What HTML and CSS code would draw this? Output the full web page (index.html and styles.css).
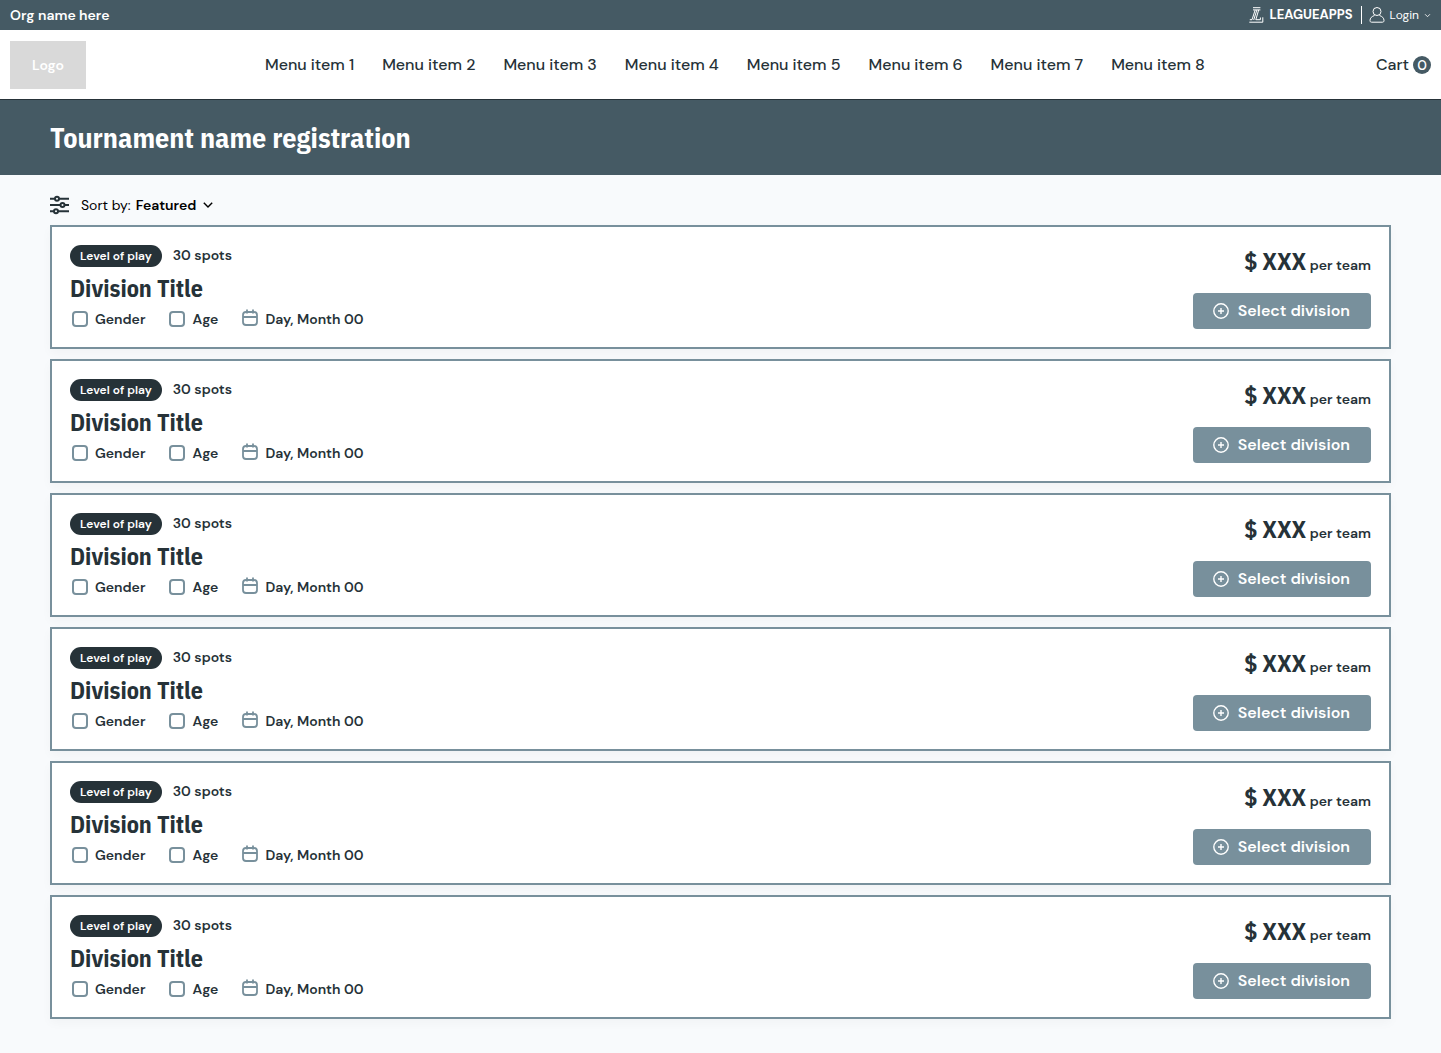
FILE: index.html
```
<!DOCTYPE html>
<html lang="en">
<head>
    <meta charset="UTF-8">
    <meta name="viewport" content="width=device-width, initial-scale=1.0">
    <title>Tournament name registration</title>
    <link rel="stylesheet" href="styles.css">
</head>
<body>

<!-- shared icons -->
<svg class="sprite" aria-hidden="true">
    <symbol id="icon-calendar" viewBox="0 0 20 20">
        <rect x="3" y="3" width="14" height="13" rx="3"/>
        <path d="M3 8h14M7 .5v4M13 .5v4"/>
    </symbol>
    <symbol id="icon-plus" viewBox="0 0 18 18">
        <circle cx="9" cy="9" r="7.2"/>
        <path d="M9 6v6M6 9h6"/>
    </symbol>
    <symbol id="icon-chevron" viewBox="0 0 10 10">
        <path d="M1.5 3.2L5 6.7l3.5-3.5"/>
    </symbol>
</svg>

<header>
    <div class="topbar">
        <span class="org">Org name here</span>
        <div class="account">
            <a class="brand" href="#">
                <svg width="15" height="16" viewBox="0 0 15 16">
                    <path d="M4 .7h7.4M4 2.9h7.4M6.2 2.9L3 12.7H.8M7.9 2.9L4.7 13M9.7 2.9L6.8 12.7h4.6v-2.2M.3 15.2h13.5v-4.9"/>
                </svg>
                <span>LEAGUEAPPS</span>
            </a>
            <button class="login" type="button">
                <svg width="16" height="18" viewBox="0 0 16 18">
                    <circle cx="8" cy="5.5" r="4"/>
                    <path d="M5.5 9.5C2.8 10.4 1 12 1 14.5c0 1.2.6 1.7 1.6 1.7h10.8c1 0 1.6-.5 1.6-1.7 0-2.5-1.8-4.1-4.5-5"/>
                </svg>
                <span>Login</span>
                <svg class="chevron" width="7" height="7"><use href="#icon-chevron"/></svg>
            </button>
        </div>
    </div>
    <div class="mainbar">
        <a class="logo" href="#">Logo</a>
        <nav class="menu">
            <a href="#">Menu item 1</a>
            <a href="#">Menu item 2</a>
            <a href="#">Menu item 3</a>
            <a href="#">Menu item 4</a>
            <a href="#">Menu item 5</a>
            <a href="#">Menu item 6</a>
            <a href="#">Menu item 7</a>
            <a href="#">Menu item 8</a>
        </nav>
        <a class="cart" href="#">Cart <span class="count">0</span></a>
    </div>
</header>

<div class="banner">
    <h1>Tournament name registration</h1>
</div>

<main>
    <div class="sort">
        <svg class="filters" width="20" height="20" viewBox="0 0 20 20">
            <path d="M0 3.7h5M9 3.7h10M0 10h10.5M14.5 10H19M0 16.3h4M8 16.3h11"/>
            <circle cx="7" cy="3.7" r="2"/>
            <circle cx="12.5" cy="10" r="2"/>
            <circle cx="6" cy="16.3" r="2"/>
        </svg>
        <label for="sort">Sort by:</label>
        <select id="sort">
            <option>Featured</option>
        </select>
        <svg class="chevron" width="12" height="12"><use href="#icon-chevron"/></svg>
    </div>

    <div class="divisions">
        <article class="card">
            <div class="info">
                <div class="tags"><span class="level">Level of play</span><span>30 spots</span></div>
                <h2>Division Title</h2>
                <div class="meta">
                    <label><input type="checkbox">Gender</label>
                    <label><input type="checkbox">Age</label>
                    <span class="date"><svg><use href="#icon-calendar"/></svg>Day, Month 00</span>
                </div>
            </div>
            <div class="buy">
                <div class="price"><strong>$ XXX</strong> per team</div>
                <button class="select" type="button"><svg><use href="#icon-plus"/></svg>Select division</button>
            </div>
        </article>

        <article class="card">
            <div class="info">
                <div class="tags"><span class="level">Level of play</span><span>30 spots</span></div>
                <h2>Division Title</h2>
                <div class="meta">
                    <label><input type="checkbox">Gender</label>
                    <label><input type="checkbox">Age</label>
                    <span class="date"><svg><use href="#icon-calendar"/></svg>Day, Month 00</span>
                </div>
            </div>
            <div class="buy">
                <div class="price"><strong>$ XXX</strong> per team</div>
                <button class="select" type="button"><svg><use href="#icon-plus"/></svg>Select division</button>
            </div>
        </article>

        <article class="card">
            <div class="info">
                <div class="tags"><span class="level">Level of play</span><span>30 spots</span></div>
                <h2>Division Title</h2>
                <div class="meta">
                    <label><input type="checkbox">Gender</label>
                    <label><input type="checkbox">Age</label>
                    <span class="date"><svg><use href="#icon-calendar"/></svg>Day, Month 00</span>
                </div>
            </div>
            <div class="buy">
                <div class="price"><strong>$ XXX</strong> per team</div>
                <button class="select" type="button"><svg><use href="#icon-plus"/></svg>Select division</button>
            </div>
        </article>

        <article class="card">
            <div class="info">
                <div class="tags"><span class="level">Level of play</span><span>30 spots</span></div>
                <h2>Division Title</h2>
                <div class="meta">
                    <label><input type="checkbox">Gender</label>
                    <label><input type="checkbox">Age</label>
                    <span class="date"><svg><use href="#icon-calendar"/></svg>Day, Month 00</span>
                </div>
            </div>
            <div class="buy">
                <div class="price"><strong>$ XXX</strong> per team</div>
                <button class="select" type="button"><svg><use href="#icon-plus"/></svg>Select division</button>
            </div>
        </article>

        <article class="card">
            <div class="info">
                <div class="tags"><span class="level">Level of play</span><span>30 spots</span></div>
                <h2>Division Title</h2>
                <div class="meta">
                    <label><input type="checkbox">Gender</label>
                    <label><input type="checkbox">Age</label>
                    <span class="date"><svg><use href="#icon-calendar"/></svg>Day, Month 00</span>
                </div>
            </div>
            <div class="buy">
                <div class="price"><strong>$ XXX</strong> per team</div>
                <button class="select" type="button"><svg><use href="#icon-plus"/></svg>Select division</button>
            </div>
        </article>

        <article class="card">
            <div class="info">
                <div class="tags"><span class="level">Level of play</span><span>30 spots</span></div>
                <h2>Division Title</h2>
                <div class="meta">
                    <label><input type="checkbox">Gender</label>
                    <label><input type="checkbox">Age</label>
                    <span class="date"><svg><use href="#icon-calendar"/></svg>Day, Month 00</span>
                </div>
            </div>
            <div class="buy">
                <div class="price"><strong>$ XXX</strong> per team</div>
                <button class="select" type="button"><svg><use href="#icon-plus"/></svg>Select division</button>
            </div>
        </article>
    </div>
</main>

</body>
</html>
```
FILE: styles.css
```
* {
    box-sizing: border-box;
}

body {
    margin: 0;
    background-color: #f8fafc;
    color: #263238;
    font-family: "DM Sans", Inter, sans-serif;
    font-size: 14px;
    font-weight: 600;
    line-height: 20px;
}

a {
    color: inherit;
    text-decoration: none;
}

button,
select {
    border: 0;
    padding: 0;
    background: none;
    color: inherit;
    font: inherit;
    cursor: pointer;
}

svg {
    flex: none;
    fill: none;
    stroke: currentColor;
}

.sprite {
    display: none;
}

.chevron {
    stroke-width: 1.2;
}

/* header */

.topbar {
    display: flex;
    align-items: center;
    justify-content: space-between;
    height: 30px;
    padding: 0 10px;
    background-color: #455a64;
    color: #ffffff;
}

.account,
.brand,
.login {
    display: flex;
    align-items: center;
}

.brand {
    gap: 5px;
    padding-right: 8px;
    border-right: 1px solid #ffffff;
    font-family: "DM Sans", Roboto, sans-serif;
    font-size: 13px;
    font-weight: 700;
    line-height: 18px;
}

.login {
    gap: 5px;
    padding-left: 7px;
    font-size: 12px;
    font-weight: 400;
}

.mainbar {
    display: flex;
    align-items: center;
    padding: 11px 10px 10px;
    border-bottom: 1px solid #263238;
    background-color: #ffffff;
    font-size: 16px;
    font-weight: 500;
}

.logo {
    display: flex;
    align-items: center;
    justify-content: center;
    width: 76px;
    height: 48px;
    background-color: #d9d9d9;
    color: #ffffff;
    font-size: 14px;
    font-weight: 600;
}

.menu {
    display: flex;
    flex: 1;
    justify-content: center;
    gap: 28px;
    padding-left: 8px;
}

.cart {
    display: flex;
    align-items: center;
    gap: 4px;
}

.count {
    width: 18px;
    height: 18px;
    border-radius: 50%;
    background-color: #455a64;
    color: #ffffff;
    font-size: 14px;
    line-height: 18px;
    text-align: center;
}

.banner {
    padding: 20px 50px;
    background-color: #455a64;
    color: #ffffff;
}

h1,
h2 {
    margin: 0;
    font-family: "IBM Plex Sans Condensed", Roboto, sans-serif;
    font-weight: 700;
}

h1 {
    font-size: 28px;
    line-height: 35px;
}

/* list */

main {
    padding: 20px 50px 30px;
}

.sort {
    display: flex;
    align-items: center;
    padding-bottom: 10px;
    color: #000000;
}

.sort label {
    padding: 0 5px 0 11px;
    font-weight: 400;
}

.sort select {
    height: 20px;
    margin-right: 5px;
    appearance: none;
}

.filters {
    color: #263238;
    stroke-width: 2;
}

.divisions {
    display: flex;
    flex-direction: column;
    gap: 10px;
}

.card {
    display: flex;
    justify-content: space-between;
    padding: 18px;
    border: 2px solid #78909c;
    background-color: #ffffff;
    box-shadow: 0 4px 10px rgba(0, 0, 0, 0.03);
}

.info {
    display: flex;
    flex-direction: column;
    gap: 5px;
}

.tags {
    display: flex;
    gap: 11px;
}

.level {
    padding: 0 10px;
    border-radius: 11px;
    background-color: #263238;
    color: #ffffff;
    font-size: 12px;
    line-height: 22px;
}

h2 {
    font-size: 24px;
    line-height: 32px;
}

.meta {
    display: flex;
    gap: 22px;
}

.meta label,
.date {
    display: flex;
    align-items: center;
    gap: 5px;
}

.meta input {
    width: 16px;
    height: 16px;
    margin: 0 2px;
    border: 2px solid #78909c;
    border-radius: 4px;
    appearance: none;
}

.meta input:checked {
    background-color: #78909c;
}

.date svg {
    width: 20px;
    height: 20px;
    color: #78909c;
    stroke-width: 1.8;
}

.buy {
    display: flex;
    flex-direction: column;
    align-items: flex-end;
    justify-content: space-between;
}

.price strong {
    font-family: "IBM Plex Sans Condensed", Roboto, sans-serif;
    font-size: 24px;
    line-height: 32px;
}

.select {
    display: flex;
    align-items: center;
    gap: 8px;
    padding: 8px 21px 8px 19px;
    border-radius: 4px;
    background-color: #78909c;
    color: #ffffff;
    font-size: 16px;
}

.select svg {
    width: 18px;
    height: 18px;
    stroke-width: 1.4;
}
```
